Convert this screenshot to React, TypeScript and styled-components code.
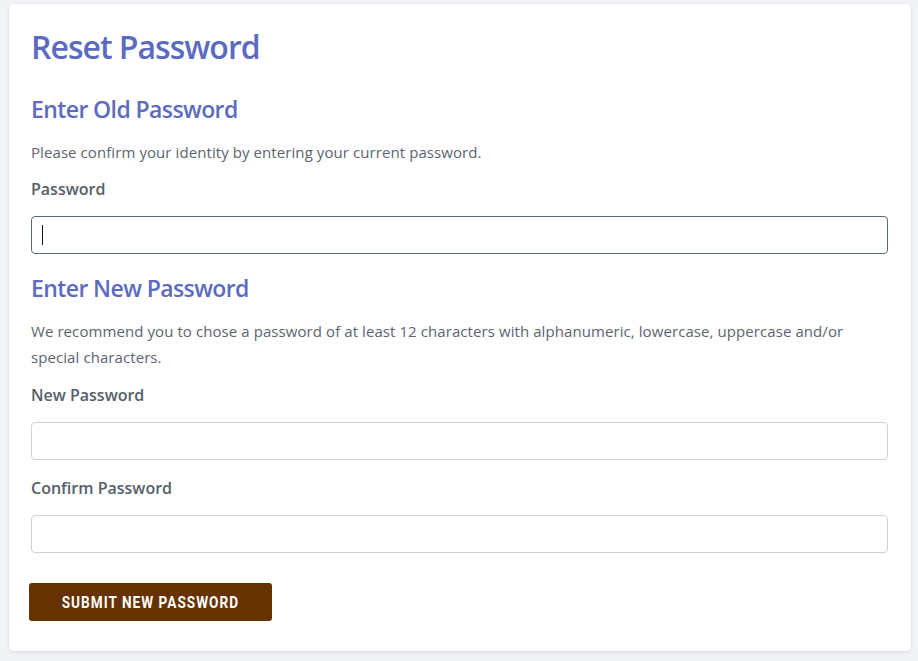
import React from 'react';
import styled, { createGlobalStyle } from 'styled-components';

const GlobalStyle = createGlobalStyle`
    html, body {
        margin: 0;
        padding: 0;
        background: #f1f3f6;
        font-family: 'Open Sans', 'Noto Sans', sans-serif;
    }
`;

const Page = styled.div`
    padding: 4px 7px 10px 9px;
`;

const Card = styled.div`
    background: #ffffff;
    border-radius: 5px;
    box-shadow: 0 1px 4px rgba(30, 40, 70, 0.12);
    padding: 22px 23px 30px 22px;
`;

const Title = styled.h1`
    margin: 0;
    font-size: 32px;
    line-height: 42px;
    font-weight: 600;
    letter-spacing: -1px;
    color: #5c6bc0;
`;

const SectionHeading = styled.h2<{ $top: number }>`
    margin: ${p => p.$top}px 0 0 0;
    font-size: 23px;
    line-height: 30px;
    font-weight: 600;
    letter-spacing: -0.6px;
    color: #5c6bc0;
`;

const Intro = styled.p`
    margin: 15px 0 0 0;
    font-size: 15px;
    line-height: 26px;
    letter-spacing: 0.08px;
    color: #5b6470;
`;

const Field = styled.div<{ $top: number }>`
    display: flex;
    flex-direction: column;
    gap: 16px;
    margin-top: ${p => p.$top}px;
`;

const Label = styled.label`
    font-size: 16px;
    line-height: 22px;
    font-weight: 600;
    color: #555e69;
`;

const InputWrap = styled.div`
    position: relative;
`;

const Input = styled.input<{ $focused?: boolean }>`
    box-sizing: border-box;
    width: 100%;
    height: 38px;
    padding: 0 10px;
    border: 1px solid ${p => (p.$focused ? '#5b6876' : '#d2d2d2')};
    border-radius: 4px;
    background: #fff;
    font-family: inherit;
    font-size: 15px;
    color: #333;
    outline: none;
`;

const Caret = styled.span`
    position: absolute;
    left: 11px;
    top: 9px;
    width: 1px;
    height: 20px;
    background: #111;
`;

const SubmitButton = styled.button`
    margin-top: 30px;
    margin-left: -2px;
    width: 243px;
    height: 38px;
    border: none;
    border-radius: 3px;
    background: #663300;
    color: #fff;
    cursor: pointer;
    padding: 0;
`;

const ButtonText = styled.span`
    display: inline-block;
    font-family: 'Roboto', sans-serif;
    font-weight: 700;
    font-size: 16px;
    letter-spacing: 1.2px;
    text-transform: uppercase;
    transform: scaleX(0.85);
`;

const App: React.FunctionComponent = () => {
    return (
        <Page>
            <GlobalStyle />
            <Card>
                <Title>Reset Password</Title>
                <SectionHeading $top={26}>Enter Old Password</SectionHeading>
                <Intro>Please confirm your identity by entering your current password.</Intro>
                <Field $top={13}>
                    <Label>Password</Label>
                    <InputWrap>
                        <Input type="password" $focused />
                        <Caret />
                    </InputWrap>
                </Field>
                <SectionHeading $top={19}>Enter New Password</SectionHeading>
                <Intro>
                    We recommend you to chose a password of at least 12 characters with alphanumeric,
                    lowercase, uppercase and/or special characters.
                </Intro>
                <Field $top={14}>
                    <Label>New Password</Label>
                    <Input type="password" />
                </Field>
                <Field $top={17}>
                    <Label>Confirm Password</Label>
                    <Input type="password" />
                </Field>
                <SubmitButton>
                    <ButtonText>Submit New Password</ButtonText>
                </SubmitButton>
            </Card>
        </Page>
    );
};

export default App;
